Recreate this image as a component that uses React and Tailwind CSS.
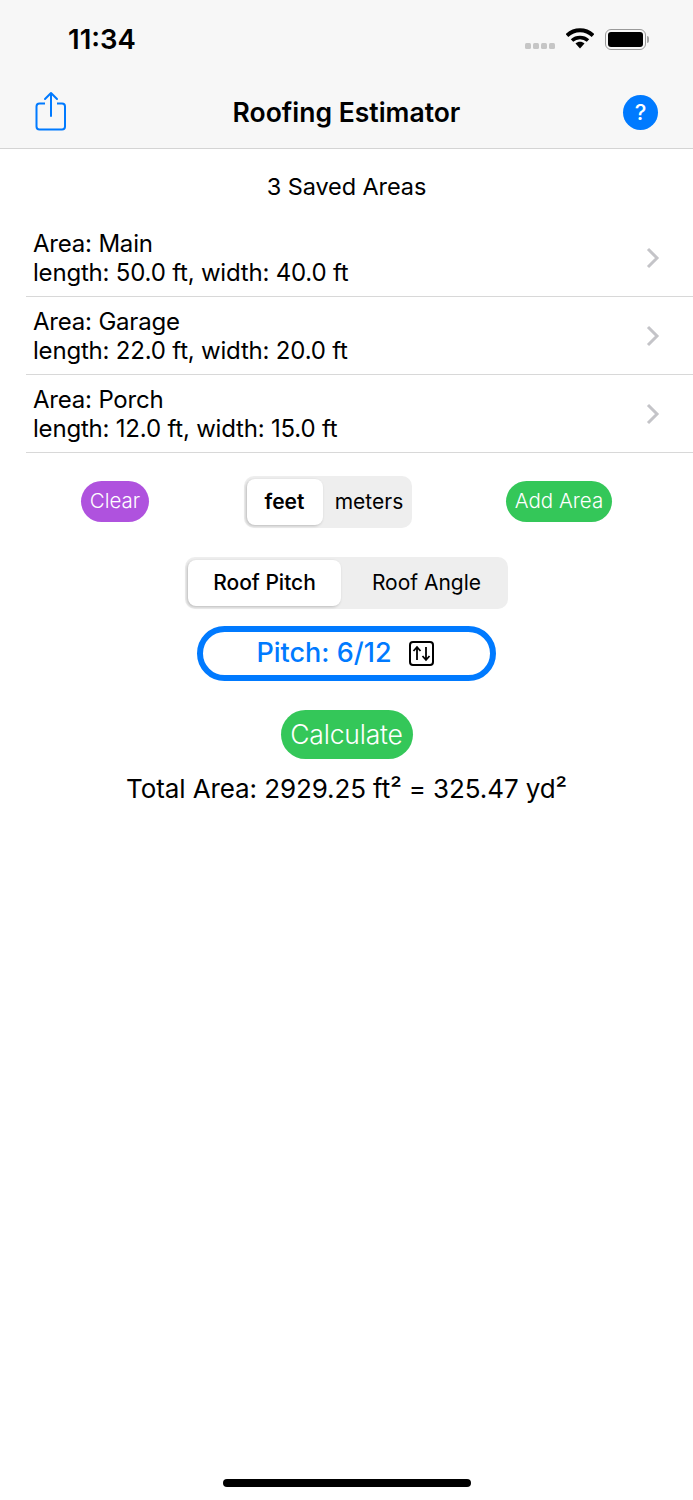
const areas = [
  { name: 'Main', size: 'length: 50.0 ft, width: 40.0 ft' },
  { name: 'Garage', size: 'length: 22.0 ft, width: 20.0 ft' },
  { name: 'Porch', size: 'length: 12.0 ft, width: 15.0 ft' },
];

const ShareIcon = () => (
  <svg width="32" height="40" viewBox="0 0 32 40" fill="none" stroke="#007aff" strokeWidth="2" className="mb-[3px]">
    <path d="M10 12.500H4.500a3 3 0 0 0-3 3v20a3 3 0 0 0 3 3h22.500a3 3 0 0 0 3-3v-20a3 3 0 0 0-3-3H22" />
    <path d="M16 25V2M10 8l6-6 6 6" strokeLinecap="round" strokeLinejoin="round" />
  </svg>
);

const StatusIcons = () => (
  <div className="flex items-center">
    <div className="flex gap-[2px] mr-[11px] mt-[13px]">
      {[0, 1, 2, 3].map((i) => (
        <div key={i} className="w-[6px] h-[6px] rounded-[1.5px] bg-[#c6c6c6]" />
      ))}
    </div>
    <svg width="28" height="22" viewBox="0 0 28 22" className="mr-[11px] mb-[1px]">
      <path d="M1 7.500C8.500 .5 19.500 .5 27 7.500" fill="none" stroke="#000" strokeWidth="3.800" />
      <path d="M6 12.500C10.500 8.500 17.500 8.500 22 12.500" fill="none" stroke="#000" strokeWidth="3.600" />
      <path d="M9.500 15.500C12 13 16 13 18.500 15.500L14 20.500Z" fill="#000" />
    </svg>
    <div className="flex items-center">
      <div className="w-[41px] h-[21px] rounded-[6px] border-[1.5px] border-[#9a9a9a] p-[2px]">
        <div className="w-full h-full rounded-[3px] bg-black" />
      </div>
      <div className="w-[2px] h-[7px] ml-[1px] rounded-r-[2px] bg-[#a5a5a5]" />
    </div>
  </div>
);

const Segmented = ({ options, widths, className, bold }) => (
  <div className={`flex bg-[#eeeeee] rounded-[10px] py-[3px] pl-[3px] h-[52px] ${className}`}>
    {options.map((o, i) => (
      <div
        key={o}
        className={`${widths[i]} h-full flex items-center justify-center text-[21px] text-black ${
          i === 0
            ? `bg-white rounded-[8px] shadow-[-1px_1px_3px_rgba(0,0,0,0.22)] ${bold}`
            : 'pl-[4px]'
        }`}
      >
        {o}
      </div>
    ))}
  </div>
);

export default function App() {
  return (
    <div className="w-[693px] h-[1500px] bg-white relative overflow-hidden font-['Inter',sans-serif] text-black">
      <header className="h-[149px] bg-[#f7f7f7] border-b border-[#d4d4d4] flex flex-col">
        <div className="h-[79px] flex items-center justify-between pl-[68px] pr-[44px]">
          <span className="text-[27.500px] font-semibold leading-none">11:34</span>
          <StatusIcons />
        </div>
        <div className="h-[69px] flex items-center justify-between px-[35px] pb-[2px]">
          <div className="w-[35px] flex">
            <ShareIcon />
          </div>
          <h1 className="text-[26.500px] font-semibold leading-none">Roofing Estimator</h1>
          <div className="w-[35px] h-[35px] rounded-full bg-[#007aff] text-white flex items-center justify-center text-[22px] font-medium">
            ?
          </div>
        </div>
      </header>

      <main className="flex flex-col items-center">
        <div className="h-[70px] w-full flex items-center justify-center text-[23.500px] tracking-[-0.1px] pt-[6px]">
          3 Saved Areas
        </div>
        <ul className="w-full pl-[26px]">
          {areas.map((a) => (
            <li
              key={a.name}
              className="h-[78px] border-b border-[#d8d8d8] flex items-center justify-between pl-[7px] pr-[33px]"
            >
              <div className="text-[24px] tracking-[-0.2px] leading-[29px]">
                <div>Area: {a.name}</div>
                <div>{a.size}</div>
              </div>
              <svg width="14" height="22" viewBox="0 0 14 22" fill="none" stroke="#c4c4c8" strokeWidth="3">
                <path d="M2 2l9 9-9 9" />
              </svg>
            </li>
          ))}
        </ul>

        <div className="w-full h-[98px] flex items-center px-[81px] justify-between">
          <button className="h-[41px] w-[68px] mb-[1px] rounded-full bg-[#af52de] text-white text-[20.500px] font-light">Clear</button>
          <Segmented
            options={['feet', 'meters']}
            widths={['w-[76px]', 'w-[89px]']}
            bold="font-semibold"
          />
          <button className="h-[41px] w-[106px] mb-[1px] rounded-full bg-[#34c759] text-white text-[20.500px] font-light">Add Area</button>
        </div>

        <Segmented
          options={['Roof Pitch', 'Roof Angle']}
          widths={['w-[153px]', 'w-[167px]']}
          className="mt-[6px]"
          bold="font-medium"
        />

        <button className="mt-[17px] w-[299px] h-[55px] pr-[3px] rounded-full border-[6px] border-[#007aff] text-[#007aff] text-[27px] font-medium flex items-center justify-center gap-[17px]">
          <span>Pitch: 6/12</span>
          <svg width="25" height="25" viewBox="0 0 25 25" fill="none" stroke="#000" strokeWidth="2">
            <rect x="1" y="1" width="23" height="23" rx="3" />
            <path d="M8 19V6.500M4.500 10L8 6l3.500 4M17 6v12.500M13.500 15l3.500 4 3.500-4" strokeWidth="1.800" />
          </svg>
        </button>

        <button className="mt-[29px] w-[132px] h-[49px] rounded-full bg-[#34c759] text-white text-[26.500px] font-light tracking-[-0.2px]">
          Calculate
        </button>

        <p className="mt-[11px] text-[26px] tracking-[-0.1px] leading-[38px]">Total Area: 2929.25 ft² = 325.47 yd²</p>
      </main>

      <div className="absolute left-[223px] bottom-[13px] w-[248px] h-[8px] rounded-full bg-black" />
    </div>
  );
}
